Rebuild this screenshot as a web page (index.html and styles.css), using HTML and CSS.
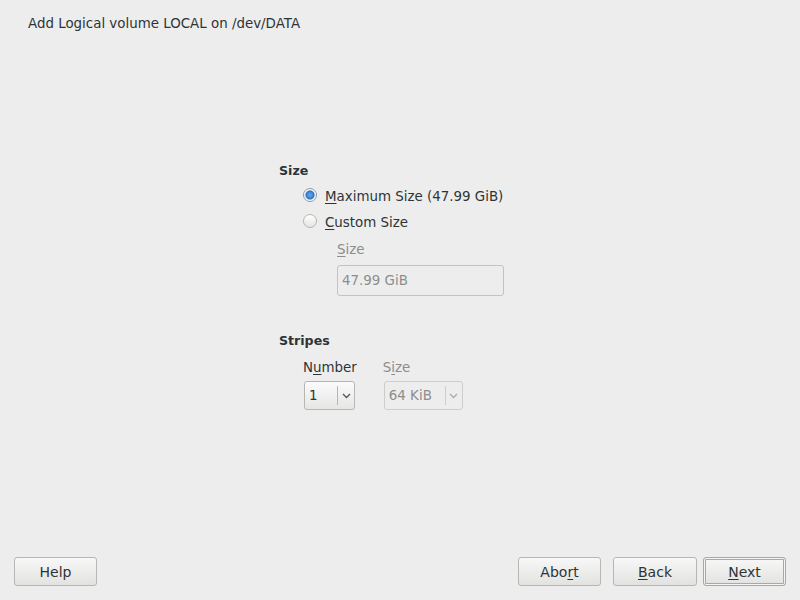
FILE: index.html
```html
<!DOCTYPE html>
<html lang="en">

<head>
  <meta charset="UTF-8">
  <title>Add Logical volume</title>
  <link rel="stylesheet" href="styles.css">
</head>

<body>
  <div class="window">
    <!-- 标题 -->
    <div class="title">Add Logical volume LOCAL on /dev/DATA</div>

    <div class="content">
      <!-- Size 组 -->
      <div class="group size-group">
        <div class="group-title">Size</div>
        <div class="group-body">
          <label class="radio-row">
            <span class="radio checked"></span>
            <span><u>M</u>aximum Size (47.99 GiB)</span>
          </label>
          <label class="radio-row">
            <span class="radio"></span>
            <span><u>C</u>ustom Size</span>
          </label>
          <div class="sub-field">
            <div class="field-label disabled"><u>S</u>ize</div>
            <div class="text-input disabled">47.99 GiB</div>
          </div>
        </div>
      </div>

      <!-- Stripes 组 -->
      <div class="group stripes-group">
        <div class="group-title">Stripes</div>
        <div class="group-body stripes-row">
          <div class="combo-field">
            <div class="field-label">N<u>u</u>mber</div>
            <div class="combo combo-number">
              <span class="combo-value">1</span>
              <span class="combo-arrow">
                <svg width="9" height="6" viewBox="0 0 9 6"><path d="M1 1 L4.5 4.5 L8 1" fill="none" stroke="#555" stroke-width="1.3"/></svg>
              </span>
            </div>
          </div>
          <div class="combo-field">
            <div class="field-label disabled">S<u>i</u>ze</div>
            <div class="combo combo-size disabled">
              <span class="combo-value">64 KiB</span>
              <span class="combo-arrow">
                <svg width="9" height="6" viewBox="0 0 9 6"><path d="M1 1 L4.5 4.5 L8 1" fill="none" stroke="#aaa" stroke-width="1.3"/></svg>
              </span>
            </div>
          </div>
        </div>
      </div>
    </div>

    <!-- 底部按钮 -->
    <div class="footer">
      <button class="btn">Help</button>
      <div class="footer-right">
        <button class="btn">Abo<u>r</u>t</button>
        <button class="btn"><u>B</u>ack</button>
        <button class="btn btn-default"><u>N</u>ext</button>
      </div>
    </div>
  </div>
</body>

</html>
```

FILE: styles.css
```css
* {
  margin: 0;
  padding: 0;
  box-sizing: border-box;
}

body {
  background: #ededed;
  color: #2e3436;
  font-family: "DejaVu Sans", "Noto Sans", sans-serif;
  font-size: 13.4px;
}

.window {
  width: 800px;
  height: 600px;
  display: flex;
  flex-direction: column;
}

/* 标题 */
.title {
  padding: 16px 0 0 28px;
  line-height: 16px;
}

/* 中间内容 */
.content {
  flex: 1;
  padding: 131px 0 0 279px;
}

.group-title {
  font-weight: bold;
  font-size: 12.6px;
  line-height: 16px;
}

.group-body {
  padding-left: 24px;
}

.size-group .group-body {
  padding-top: 4px;
}

.radio-row {
  display: flex;
  align-items: center;
  gap: 8px;
  height: 26px;
}

.radio {
  width: 14px;
  height: 14px;
  border-radius: 50%;
  border: 1px solid #b4b4b0;
  background: linear-gradient(#ffffff, #e4e4e2);
  margin-top: -3px;
}

.radio.checked {
  border-color: #8c9aa8;
  background: radial-gradient(circle at 50% 50%, #6aa6e8 0, #3f86d6 3px, #2f6fba 4px, #e8ecf0 5px, #ffffff 6px);
}

u {
  text-decoration: underline;
  text-underline-offset: 2px;
}

.sub-field {
  padding: 7px 0 0 34px;
}

.field-label {
  line-height: 16px;
}

.disabled {
  color: #8b8e8f;
}

.text-input {
  margin-top: 7px;
  width: 167px;
  height: 31px;
  border: 1px solid #c2c2bf;
  border-radius: 3px;
  background: #ededed;
  padding: 0 0 0 4px;
  line-height: 29px;
}

/* Stripes */
.stripes-group {
  margin-top: 37px;
}

.stripes-row {
  display: flex;
  gap: 26px;
  padding-top: 11px;
}

.combo {
  margin-top: 5px;
  height: 29px;
  display: flex;
  align-items: stretch;
  border: 1px solid #b6b6b3;
  border-radius: 3px;
  background: linear-gradient(#fbfbfb, #e6e6e5);
}

.combo-value {
  flex: 1;
  line-height: 27px;
  padding-left: 4px;
}

.combo-arrow {
  width: 17px;
  display: flex;
  align-items: center;
  justify-content: center;
  margin: 4px 0;
  border-left: 1px solid #b6b6b3;
}

.combo-number {
  margin-left: 1px;
  width: 51px;
}

.combo-size {
  margin-left: 1px;
  width: 79px;
  border-color: #cdcdca;
  background: #ededed;
}

.combo-size .combo-arrow {
  border-left-color: #cdcdca;
}

/* 底部按钮 */
.footer {
  display: flex;
  justify-content: space-between;
  padding: 0 14px 14px 14px;
}

.footer-right {
  display: flex;
  gap: 12px;
}

.btn {
  width: 83px;
  height: 29px;
  border: 1px solid #b6b6b3;
  border-radius: 3px;
  background: linear-gradient(#f8f8f8, #e2e2e0);
  color: #2e3436;
  font-family: inherit;
  font-size: 14px;
}

.footer-right .btn:nth-child(2) {
  width: 84px;
}

.footer-right .btn-default {
  margin-left: -6px;
  border-color: #a8a8a5;
  box-shadow: inset 0 0 0 1px #f4f4f4, inset 0 0 0 2px #a8a8a5;
}
```
